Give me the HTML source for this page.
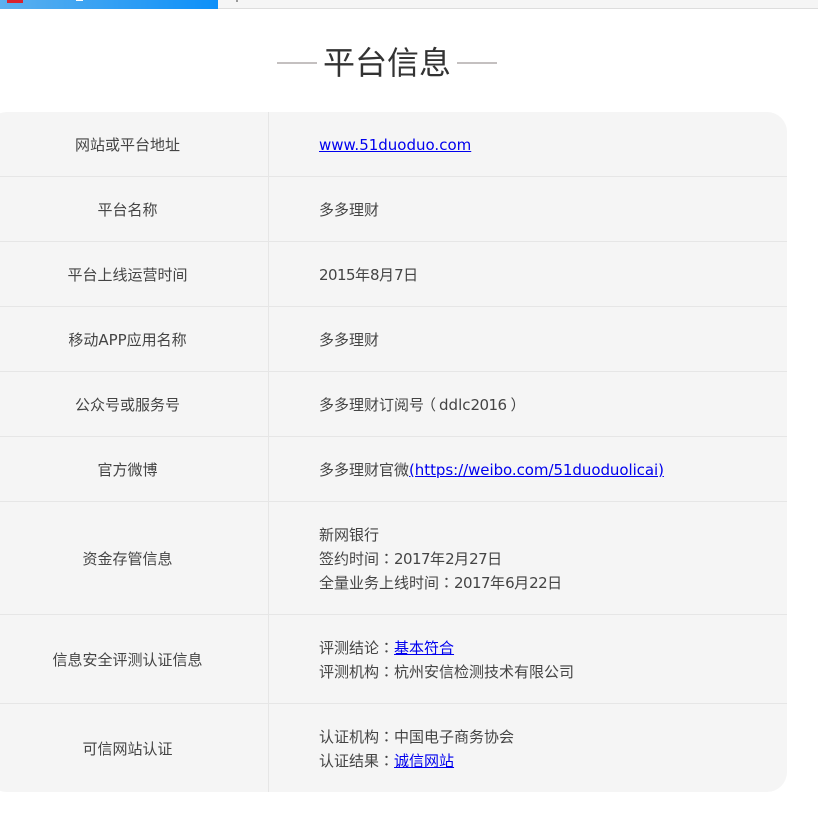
<!DOCTYPE html>
<html lang="zh-CN"><head><meta charset="utf-8"><title>平台信息</title>
<style>
html,body{margin:0;padding:0;background:#fff}
body{width:818px;height:833px;position:relative;overflow:hidden;font-family:"DejaVu Sans","Noto Sans CJK SC",sans-serif;font-size:15px;color:#444}
div{position:absolute}
a{color:#00e}
.tb{left:-13px;top:112px;width:800px;height:680px;background:#f5f5f5;border-radius:20px}
.h{left:0;width:787px;height:1px;background:#e6e6e6}
.l{left:-13px;width:281px;text-align:center;line-height:24px;white-space:nowrap}
.r{left:319px;line-height:24px;white-space:nowrap}
i{font-style:normal;letter-spacing:-.54px}
b{font-weight:400;font-family:"Noto Sans CJK TC",sans-serif}
u{text-decoration:none;position:relative}
</style></head><body>
<div style="left:0;top:0;width:818px;height:8px;background:#f5f5f5;border-bottom:1px solid #ddd"></div>
<div style="left:0;top:0;width:218px;height:9px;background:linear-gradient(90deg,#5cb0ee,#0d90f9)"></div>
<div style="left:7px;top:0;width:16px;height:3px;background:#d9232e"></div>
<div style="left:76px;top:0;width:7px;height:1px;background:#fff"></div>
<div style="left:236px;top:0;width:2px;height:2px;background:#999"></div>

<div style="left:277px;top:62px;width:40px;height:2px;background:#c4c0c0"></div>
<div style="left:457px;top:62px;width:40px;height:2px;background:#c4c0c0"></div>
<div style="left:323px;top:41px;font-size:32px;line-height:44px;color:#333;white-space:nowrap">平台信息</div>

<div class="tb"></div>
<div style="left:268px;top:112px;width:1px;height:680px;background:#e6e6e6"></div>
<div class="h" style="top:176px"></div>
<div class="h" style="top:241px"></div>
<div class="h" style="top:306px"></div>
<div class="h" style="top:371px"></div>
<div class="h" style="top:436px"></div>
<div class="h" style="top:501px"></div>
<div class="h" style="top:614px"></div>
<div class="h" style="top:703px"></div>

<div class="l" style="top:133px">网站或平台地址</div>
<div class="r" style="top:133px"><a href="#">www.51duoduo.com</a></div>
<div class="l" style="top:198px">平台名称</div>
<div class="r" style="top:198px">多多理财</div>
<div class="l" style="top:263px">平台上线运营时间</div>
<div class="r" style="top:263px"><i>2015</i>年<i>8</i>月<i>7</i>日</div>
<div class="l" style="top:328px">移动APP应用名称</div>
<div class="r" style="top:328px">多多理财</div>
<div class="l" style="top:393px">公众号或服务号</div>
<div class="r" style="top:393px">多多理财订阅号<u style="left:-3px">（</u>ddlc<i>2016</i><u style="left:4px">）</u></div>
<div class="l" style="top:458px">官方微博</div>
<div class="r" style="top:458px">多多理财官微<a href="#" style="letter-spacing:-.06px">(https://weibo.com/51duoduolicai)</a></div>
<div class="l" style="top:547px">资金存管信息</div>
<div class="r" style="top:523px">新网银行<br>签约时间<b lang="zh-TW">：</b><i>2017</i>年<i>2</i>月<i>27</i>日<br>全量业务上线时间<b lang="zh-TW">：</b><i>2017</i>年<i>6</i>月<i>22</i>日</div>
<div class="l" style="top:648px">信息安全评测认证信息</div>
<div class="r" style="top:636px">评测结论<b lang="zh-TW">：</b><a href="#">基本符合</a><br>评测机构<b lang="zh-TW">：</b>杭州安信检测技术有限公司</div>
<div class="l" style="top:737px">可信网站认证</div>
<div class="r" style="top:725px">认证机构<b lang="zh-TW">：</b>中国电子商务协会<br>认证结果<b lang="zh-TW">：</b><a href="#">诚信网站</a></div>
</body></html>
